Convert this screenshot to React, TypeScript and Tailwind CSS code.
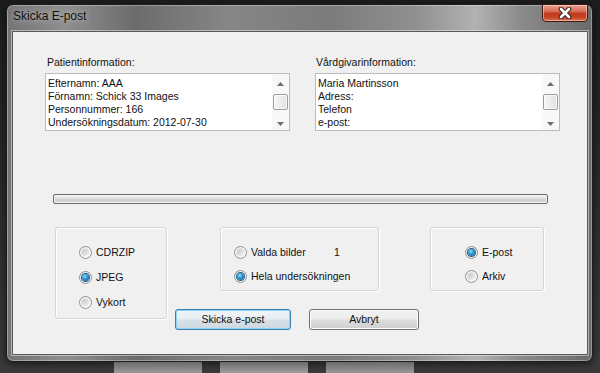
import React from "react";

// Windows 7 style "Skicka E-post" dialog

const Radio = ({ label, checked }: { label: string; checked?: boolean }) => (
  <div className="flex h-[14px] items-center gap-[4px]">
    <span className="flex h-[13px] w-[13px] items-center justify-center rounded-full border border-[#8d9094] bg-[linear-gradient(135deg,#d8d8d8,#ffffff)] shadow-[inset_0_0_0_1px_#f7f7f7]">
      {checked ? (
        <span className="h-[7px] w-[7px] rounded-full bg-[radial-gradient(circle_at_40%_35%,#8adaf8_0%,#2d93d3_45%,#0c4a7a_100%)] shadow-[0_0_0_1px_#24577d]" />
      ) : (
        <span className="h-[7px] w-[7px] rounded-full bg-[linear-gradient(135deg,#c4c4c4,#f3f3f3)]" />
      )}
    </span>
    <span className="leading-[14px]">{label}</span>
  </div>
);

const Arrow = ({ up }: { up?: boolean }) => (
  <svg width="7" height="4" viewBox="0 0 7 4">
    {up ? <path d="M0 4 L3.5 0 L7 4 Z" fill="#6d6d6d" /> : <path d="M0 0 L3.5 4 L7 0 Z" fill="#6d6d6d" />}
  </svg>
);

const ListBox = ({ lines }: { lines: string[] }) => (
  <div className="flex h-[58px] w-[245px] border border-[#bcbcbc] bg-white">
    <div className="flex-1 pl-[2px] pt-[3px] leading-[13px]">
      {lines.map((l) => (
        <div key={l} className="whitespace-nowrap">
          {l}
        </div>
      ))}
    </div>
    <div className="flex w-[17px] flex-col items-center bg-[#f8f8f8]">
      <div className="mt-[8px] flex h-[4px] items-center">
        <Arrow up />
      </div>
      <div className="mt-[8px] h-[16px] w-[15px] rounded-[2px] border border-[#9c9c9c] bg-[linear-gradient(90deg,#f6f6f6,#e2e2e2)] shadow-[inset_0_0_0_1px_#fbfbfb]" />
      <div className="flex-1" />
      <div className="mb-[4px] flex h-[4px] items-center">
        <Arrow />
      </div>
    </div>
  </div>
);

const CloseButton = () => (
  <div className="-mt-[1px] mr-[4px] flex h-[18px] w-[46px] items-center justify-center rounded-b-[4px] border border-[#3e1a12] bg-[linear-gradient(180deg,#eaa392_0%,#d86c55_40%,#c23b20_52%,#c4421f_75%,#d9704f_100%)] shadow-[inset_0_0_0_1px_rgba(255,220,210,0.55)]">
    <svg width="14" height="12" viewBox="0 0 14 12">
      <path d="M3 2 L11 10 M11 2 L3 10" stroke="#3a2a28" strokeWidth="4.6" strokeLinecap="round" />
      <path d="M3 2 L11 10 M11 2 L3 10" stroke="#ffffff" strokeWidth="2.6" strokeLinecap="round" />
    </svg>
  </div>
);

const WinButton = ({ label, focused }: { label: string; focused?: boolean }) =>
  focused ? (
    <div className="flex h-[21px] w-[116px] items-center justify-center rounded-[3px] border border-[#3c7fb1] bg-[linear-gradient(180deg,#f1f5f8_0%,#e6edf2_48%,#d6e0e7_52%,#cdd8e0_100%)] shadow-[inset_0_0_0_1px_#8fd3f5]">
      {label}
    </div>
  ) : (
    <div className="flex h-[21px] w-[110px] items-center justify-center rounded-[3px] border border-[#707070] bg-[linear-gradient(180deg,#f2f2f2_0%,#ebebeb_48%,#dddddd_52%,#cfcfcf_100%)] shadow-[inset_0_0_0_1px_#fcfcfc]">
      {label}
    </div>
  );

const groupBox = "rounded-[3px] border border-[#d5d5d5] shadow-[inset_1px_1px_0_#ffffff,1px_1px_0_#ffffff]";

export default function App() {
  return (
    <div className="h-[373px] w-[600px] overflow-hidden bg-[linear-gradient(180deg,#1d1d1d_0%,#2b2b2b_50%,#3b3b3b_100%)] pl-[6px] pt-[4px] font-['Liberation_Sans',Arial,sans-serif] text-[10.5px] text-[#111]">
      <div className="flex h-[358px] w-[587px] flex-col rounded-[7px] border border-[#1e1e1e] bg-[linear-gradient(90deg,#747474_0%,#8e8e8e_10%,#6c6c6c_22%,#868686_38%,#7b7b7b_55%,#909090_70%,#b2b2b2_80%,#8a8a8a_88%,#6b6b6b_100%)] shadow-[inset_0_0_0_1px_rgba(255,255,255,0.3),0_2px_8px_rgba(0,0,0,0.6)]">
        <div className="flex h-[26px] shrink-0 justify-between">
          <span className="pl-[6px] pt-[4px] text-[12px] leading-[14px] text-[#101010] [text-shadow:0_0_6px_rgba(255,255,255,0.7)]">
            Skicka E-post
          </span>
          <CloseButton />
        </div>
        <div className="ml-[5px] mr-[4px] h-[324px] border border-[#5a5a5a] bg-[#f0f0f0] shadow-[0_0_0_1px_rgba(255,255,255,0.45)]">
          <div className="flex gap-[25px] pl-[32px] pt-[24px]">
            <div>
              <div className="pl-[2px] leading-[13px]">Patientinformation:</div>
              <div className="mt-[4px]">
                <ListBox lines={["Efternamn: AAA", "Förnamn: Schick 33 Images", "Personnummer: 166", "Undersökningsdatum: 2012-07-30"]} />
              </div>
            </div>
            <div>
              <div className="pl-[1px] leading-[13px]">Vårdgivarinformation:</div>
              <div className="mt-[4px]">
                <ListBox lines={["Maria Martinsson", "Adress:", "Telefon", "e-post:"]} />
              </div>
            </div>
          </div>

          <div className="ml-[40px] mt-[63px] h-[10px] w-[495px] rounded-[2px] border border-[#686868] bg-[linear-gradient(180deg,#f7f7f7_0%,#e4e4e4_35%,#cdcdcd_60%,#d9d9d9_100%)] shadow-[inset_0_0_0_1px_#f4f4f4]" />

          <div className="ml-[42px] mt-[23px] flex items-start">
            <div className={`h-[92px] w-[112px] ${groupBox} flex flex-col gap-[11px] pl-[23px] pt-[17px]`}>
              <Radio label="CDRZIP" />
              <Radio label="JPEG" checked />
              <Radio label="Vykort" />
            </div>
            <div className="ml-[8px] flex flex-col">
              <div className="ml-[45px] flex gap-[51px]">
                <div className={`h-[64px] w-[159px] ${groupBox} flex flex-col gap-[10px] pl-[13px] pt-[17px]`}>
                  <div className="flex items-center">
                    <div className="w-[100px]">
                      <Radio label="Valda bilder" />
                    </div>
                    <span className="leading-[14px]">1</span>
                  </div>
                  <Radio label="Hela undersökningen" checked />
                </div>
                <div className={`h-[64px] w-[114px] ${groupBox} flex flex-col gap-[10px] pl-[34px] pt-[17px]`}>
                  <Radio label="E-post" checked />
                  <Radio label="Arkiv" />
                </div>
              </div>
              <div className="mt-[18px] flex gap-[18px]">
                <WinButton label="Skicka e-post" focused />
                <WinButton label="Avbryt" />
              </div>
            </div>
          </div>
        </div>
      </div>
      <div className="ml-[108px] flex h-[11px] gap-[18px]">
        <div className="h-full w-[88px] bg-[linear-gradient(180deg,#6a6a6a,#9a9a9a)]" />
        <div className="h-full w-[88px] bg-[linear-gradient(180deg,#6a6a6a,#9e9e9e)]" />
        <div className="h-full w-[88px] bg-[linear-gradient(180deg,#6a6a6a,#989898)]" />
      </div>
    </div>
  );
}
